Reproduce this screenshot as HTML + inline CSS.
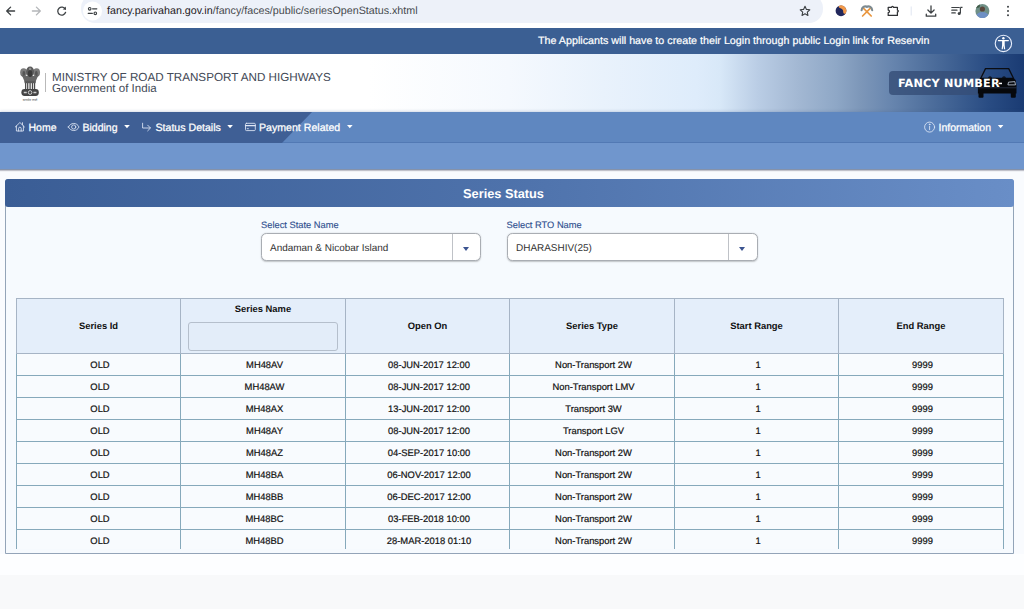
<!DOCTYPE html>
<html lang="en">
<head>
<meta charset="utf-8">
<title>Series Status</title>
<style>
*{box-sizing:border-box;margin:0;padding:0}
html,body{width:1024px;height:609px;overflow:hidden}
body{text-rendering:geometricPrecision;font-family:"Liberation Sans",Arial,sans-serif;background:#f9fbfe;color:#222;position:relative}
.abs{position:absolute}
/* browser chrome */
#chrome{left:0;top:0;width:1024px;height:28px;background:#fff}
#urlpill{left:81px;top:-6px;width:741.500px;height:28.500px;border-radius:14px;background:#edf1f9}
#url{left:107px;top:5px;font-size:10.73px;color:#1f2023;white-space:nowrap}
/* top bar */
#topbar{left:0;top:28px;width:1024px;height:26.500px;background:#3b5f93}
#marq{-webkit-text-stroke:.2px #fff;left:538px;top:35px;font-size:10.73px;color:#fff;white-space:nowrap}
/* header */
#header{left:0;top:54px;width:1024px;height:58px;background:linear-gradient(90deg,#ffffff 0%,#ffffff 36%,#f5f9fe 49.700%,#e9f2fc 58.900%,#deecfb 68%,#d8e8f8 70.300%,#bacde5 74%,#a3b8d3 77.900%,#8ea7c6 81.700%,#7d97b9 84%,#6785ae 87.100%,#52729f 90.200%,#3d5f91 93.400%,#294c83 96.500%,#1a3b73 100%)}
#hline{left:45px;top:73px;width:1px;height:19px;background:#b9b9b9}
#t1{left:52px;top:70.500px;font-size:11.67px;color:#434a57;white-space:nowrap}
#t2{left:52px;top:83px;font-size:11.55px;color:#434a57;white-space:nowrap}
#fancy{left:889px;top:71px;width:96px;height:24px;border-radius:4px;background:rgba(54,78,120,.82)}
#fancytxt{left:898px;top:77px;letter-spacing:.2px;font-family:"DejaVu Sans","Liberation Sans",sans-serif;font-weight:bold;font-size:11.24px;color:#fff;white-space:nowrap}
/* nav */
#nav{left:0;top:112px;width:1024px;height:31px;background:#5f87c0;border-bottom:1px solid #5279b4;box-shadow:0 -1px 2.500px rgba(70,90,140,.22)}
#navdark{left:0;top:112px;width:312px;height:31px;background:#3f5f95;clip-path:polygon(0 0,100% 0,282px 100%,0 100%)}
.nv{-webkit-text-stroke:.25px #fff;top:122px;font-size:10.5px;color:#fff;white-space:nowrap}
#strip{left:0;top:143px;width:1024px;height:27px;background:#7096cd;border-bottom:1px solid #8592aa;box-shadow:0 1px 1px rgba(90,90,110,.35)}
/* panel */
#panel{left:5px;top:179px;width:1009px;height:375px;border:1px solid #93a4b8;border-radius:3px 3px 0 0;background:#f6fafe}
#phead{left:5px;top:178.500px;width:1009px;height:28px;border-radius:3px;background:linear-gradient(90deg,#3a5d95 0%,#4e72ab 50%,#698ec7 100%)}
#ptitle{left:5px;top:186px;width:1009px;text-align:center;font-size:12.78px;font-weight:bold;color:#fff;padding-right:12px}
.lbl{-webkit-text-stroke:.12px #2f4f8f;font-size:9.32px;color:#2f4f8f;white-space:nowrap}
.sel{height:28px;border:1.200px solid #a9adb3;border-radius:5.500px;background:#fff;box-shadow:0 .5px 1.500px rgba(0,0,0,.22)}
.seltxt{font-size:9.96px;color:#333;white-space:nowrap}
.selbtn{width:29px;height:26px;border-left:1px solid #bfc2c7}
.tri{width:0;height:0;border-left:3.700px solid transparent;border-right:3.700px solid transparent;border-top:4.500px solid #3b5490}
/* table */
table{border-collapse:collapse;table-layout:fixed;font-size:9.4px;color:#111}
th{background:#e4eefa;border:1px solid #a6b4c5;font-weight:bold;height:55px;text-align:center;vertical-align:middle;padding-bottom:2px}
td{-webkit-text-stroke:.2px #111;border:1px solid #86a9bb;height:22px;text-align:center;background:#f8fbfe;padding-left:3px}
</style>
</head>
<body>
<div id="chrome" class="abs"></div>
<div id="urlpill" class="abs"></div>

<svg class="abs" style="left:0;top:0" width="1024" height="28" viewBox="0 0 1024 28" fill="none">
<!-- back -->
<path d="M14.6 11H6.8M10.6 7.1L6.7 11l3.9 3.9" stroke="#3c4043" stroke-width="1.3" stroke-linecap="round" stroke-linejoin="round"/>
<!-- forward -->
<path d="M32.4 11h7.8M36.4 7.1l3.9 3.9-3.9 3.9" stroke="#b4b6b9" stroke-width="1.3" stroke-linecap="round" stroke-linejoin="round"/>
<!-- reload -->
<path d="M65.3 9.2A4 4 0 1 0 65.6 12.3" stroke="#3c4043" stroke-width="1.3" stroke-linecap="round"/>
<path d="M65.9 6.4v3.2h-3.2z" fill="#3c4043"/>
<!-- site info -->
<circle cx="92.5" cy="11" r="9.6" fill="#fff"/>
<circle cx="89.7" cy="8.8" r="1.3" stroke="#3c4043" stroke-width="1.1"/>
<path d="M92.6 8.8h4.2M88.2 13.3h4.2" stroke="#3c4043" stroke-width="1.2" stroke-linecap="round"/>
<circle cx="95.3" cy="13.3" r="1.3" stroke="#3c4043" stroke-width="1.1"/>
<!-- star -->
<path d="M805 6.3l1.45 3.1 3.35.4-2.5 2.3.65 3.3-2.95-1.65-2.95 1.65.65-3.3-2.5-2.3 3.35-.4z" stroke="#3c4043" stroke-width="1.1" stroke-linejoin="round"/>
<!-- ext 1 -->
<circle cx="841" cy="10.800" r="5.400" fill="#22285c"/>
<path d="M838.800 5.900A5.400 5.400 0 0 1 845.600 13.600C844.500 14.300 843 13.400 843.200 11.800C843.400 10 842 8.700 840.500 8.300C839.400 8 838.600 7.200 838.800 5.900z" fill="#f2994a"/>
<!-- ext 2 hammers -->
<path d="M862.600 16l7.600-7.600M871.200 16l-7.600-7.600" stroke="#e9963e" stroke-width="1.700" stroke-linecap="round"/>
<path d="M861.600 10.200c.2-2.800 2.800-4.700 5.600-3.400M872.200 10.200c-.2-2.800-2.800-4.700-5.600-3.400" stroke="#7d8a90" stroke-width="2.100" stroke-linecap="round"/>
<!-- ext 3 puzzle -->
<path d="M888.200 7.300h3.400a.9.9 0 0 1 1.800 0h4v2.800a.9.9 0 0 1 0 1.800v3.500h-9.200v-2.800a1.300 1.300 0 0 0 0-2.600z" stroke="#2f3134" stroke-width="1.250" stroke-linejoin="round"/>
<!-- sep -->
<path d="M911.200 6.500v9" stroke="#dfe5f1" stroke-width="1"/>
<!-- download -->
<path d="M931 6v6.800M927.900 10l3.100 3.100 3.100-3.100M926.300 14.200v2h9.400v-2" stroke="#3c4043" stroke-width="1.3" stroke-linecap="round" stroke-linejoin="round"/>
<!-- media -->
<path d="M951.800 7.500h7.500M951.800 10.200h5.200M951.800 12.900h3.500" stroke="#3c4043" stroke-width="1.200" stroke-linecap="round"/>
<path d="M960.400 7.400v5.800" stroke="#3c4043" stroke-width="1.2"/>
<path d="M960.400 7.400h2.100" stroke="#3c4043" stroke-width="1.3"/>
<circle cx="959.200" cy="13.400" r="1.500" fill="#3c4043"/>
<!-- avatar -->
<circle cx="982.400" cy="11" r="7" fill="#6f8f86"/>
<path d="M976.500 14.800a6.300 4.500 0 0 1 11.800 0a7 7 0 0 1-11.800 0z" fill="#6e8fc4"/>
<circle cx="982.400" cy="9" r="2.600" fill="#5a463c"/>
<path d="M976 8a7 7 0 0 1 4-3.500l-.5 3z" fill="#3f5a46"/>
<!-- dots -->
<circle cx="1008" cy="6.700" r="1" fill="#3c4043"/><circle cx="1008" cy="11" r="1" fill="#3c4043"/><circle cx="1008" cy="15.300" r="1" fill="#3c4043"/>
</svg>
<div id="url" class="abs">fancy.parivahan.gov.in<span style="color:#474a4e">/fancy/faces/public/seriesOpenStatus.xhtml</span></div>

<div id="topbar" class="abs"></div>
<div id="marq" class="abs">The Applicants will have to create their Login through public Login link for Reservin</div>


<svg class="abs" style="left:993px;top:33px" width="21" height="21" viewBox="0 0 21 21" fill="none">
<circle cx="10.400" cy="10.400" r="8.200" stroke="#e8eefc" stroke-width="1.100"/>
<circle cx="10.400" cy="5.200" r="1.200" fill="#fff"/>
<path d="M5.400 7.600h10M10.400 7.600v4" stroke="#fff" stroke-width="1.100" stroke-linecap="round"/>
<path d="M9.100 7.600h2.600v4.300l.5 4.300h-1.200l-.6-3.600-.6 3.600h-1.200l.5-4.300z" fill="#fff"/>
</svg>
<div id="header" class="abs"></div>

<svg class="abs" style="left:18px;top:64px" width="24.200" height="40" viewBox="0 0 26 40" preserveAspectRatio="none">
<ellipse cx="6" cy="8.600" rx="3.700" ry="4.300" fill="#7b7b7b"/>
<ellipse cx="20" cy="8.600" rx="3.700" ry="4.300" fill="#7b7b7b"/>
<ellipse cx="13" cy="7.600" rx="4.300" ry="5" fill="#5c5c5c"/>
<path d="M3.600 10.500q1.500 2.500 3.600 7.500h11.600q2.100-5 3.600-7.500l-4.400 1.500h-10z" fill="#666"/>
<ellipse cx="13" cy="9.500" rx="2.400" ry="3.600" fill="#3a3a3a"/>
<ellipse cx="6.300" cy="9.500" rx="1.500" ry="2.400" fill="#555"/>
<ellipse cx="19.700" cy="9.500" rx="1.500" ry="2.400" fill="#555"/>
<circle cx="13" cy="5" r="1.300" fill="#8d8d8d"/>
<path d="M7.200 17.500h11.600v7.800h-11.600z" fill="#f4f4f4"/>
<path d="M8.200 17.500v7.800M10.400 17.500v7.800M13 17.500v7.800M15.600 17.500v7.800M17.800 17.500v7.800" stroke="#4a4a4a" stroke-width="1.300"/>
<path d="M7 17h12v2.200h-12z" fill="#5a5a5a"/>
<rect x="3.600" y="25" width="18.800" height="7" rx="3.400" fill="#444"/>
<circle cx="13" cy="28.500" r="1.900" fill="none" stroke="#dcdcdc" stroke-width=".9"/>
<path d="M6.200 28.500h3.200M16.600 28.500h3.200" stroke="#cfcfcf" stroke-width="1.500"/>
<text x="13" y="36.800" font-size="3.200" text-anchor="middle" fill="#555" font-family="'Liberation Sans',sans-serif">सत्यमेव जयते</text>
</svg>
<div id="hline" class="abs"></div>
<div id="t1" class="abs">MINISTRY OF ROAD TRANSPORT AND HIGHWAYS</div>
<div id="t2" class="abs">Government of India</div>
<div id="fancy" class="abs"></div>

<svg class="abs" style="left:975px;top:66px" width="44" height="34" viewBox="0 0 44 34">
<path d="M10.500 2.600h23.200l5 10.200h-33.200z" fill="none" stroke="#0b0d12" stroke-width="1.300" stroke-linejoin="round"/>
<path d="M6.500 11.800h31.200l3 2.200 .8 5.200v8.300h-38.600v-8.300l.8-5.200z" fill="#06080c"/>
<path d="M13 11.800c.5-1.600 3.500-1.600 4 0zM27 11.800c.5-1.600 3.500-1.600 4 0z" fill="#06080c"/>
<rect x="3.500" y="26" width="5" height="5.800" rx="1" fill="#06080c"/>
<rect x="35.800" y="26" width="5" height="5.800" rx="1" fill="#06080c"/>
<path d="M33.500 16.200l6.300-.6.700 3.300h-7.600z" fill="none" stroke="#c9d3e4" stroke-width=".8"/>
<path d="M3.400 21.800h38" stroke="#3a4660" stroke-width=".6"/>
<rect x="23.600" y="16.700" width="3.400" height="1.500" fill="#fff"/>
</svg>
<div id="fancytxt" class="abs">FANCY NUMBER</div>

<div id="nav" class="abs"></div>
<div id="navdark" class="abs"></div>
<div class="abs nv" style="left:28.500px">Home</div>
<div class="abs nv" style="left:82.500px">Bidding</div>
<div class="abs nv" style="left:155.500px;font-size:10.600px">Status Details</div>
<div class="abs nv" style="left:259px;font-size:10.600px">Payment Related</div>
<div class="abs nv" style="left:938.500px">Information</div>

<svg class="abs" style="left:0;top:112px" width="1024" height="31" viewBox="0 0 1024 31" fill="none" stroke="#dfe7f6" stroke-width=".85" stroke-linecap="round" stroke-linejoin="round">
<!-- home -->
<path d="M15.300 15l4.600-4.500 4.600 4.500M16.400 14v5h7v-5M18.600 19v-2.500a1.300 1.300 0 0 1 2.600 0v2.500M22.500 10.700v1.900"/>
<!-- eye -->
<path d="M68.400 15c2.200-4.800 8.400-4.800 10.600 0-2.200 4.800-8.400 4.800-10.600 0z"/>
<circle cx="73.700" cy="15" r="2.100"/>
<!-- arrow -->
<path d="M142.600 11.200v4.800h7.600M147.700 13.200l2.800 2.800-2.800 2.800"/>
<!-- card -->
<rect x="245.500" y="11.300" width="9.800" height="7.300" rx="1"/>
<path d="M245.500 13.600h9.800" stroke-width="1.300"/>
<path d="M247.200 16.700h1.200"/>
<!-- info -->
<circle cx="929.600" cy="15.100" r="5"/>
<path d="M929.600 14.300v3.400" />
<circle cx="929.600" cy="12.400" r=".4" fill="#e9effa"/>
<!-- carets -->
<g fill="#fff" stroke="none">
<path d="M124.200 13h5.600l-2.800 3.200z"/>
<path d="M227.300 13h5.600l-2.800 3.200z"/>
<path d="M347 13h5.600l-2.800 3.200z"/>
<path d="M997.800 13h5.600l-2.800 3.200z"/>
</g>
</svg>
<div id="strip" class="abs"></div>

<div class="abs" style="left:0;top:554px;width:1024px;height:21px;background:#fdfeff"></div><div class="abs" style="left:0;top:575px;width:1024px;height:34px;background:#f8f9fa"></div>
<div id="panel" class="abs"></div>
<div id="phead" class="abs"></div>
<div id="ptitle" class="abs">Series Status</div>

<div class="abs lbl" style="left:261px;top:220.200px">Select State Name</div>
<div class="abs sel" style="left:261px;top:233px;width:220.400px"></div>
<div class="abs seltxt" style="left:270px;top:242.500px">Andaman &amp; Nicobar Island</div>
<div class="abs selbtn" style="left:452px;top:234px"></div>
<div class="abs tri" style="left:463.200px;top:247px"></div>

<div class="abs lbl" style="left:506.500px;top:220.200px">Select RTO Name</div>
<div class="abs sel" style="left:506.500px;top:233px;width:251px"></div>
<div class="abs seltxt" style="left:516px;top:242.500px">DHARASHIV(25)</div>
<div class="abs selbtn" style="left:728px;top:234px"></div>
<div class="abs tri" style="left:739.200px;top:247px"></div>

<div class="abs" id="tblwrap" style="left:16px;top:298px;width:988px;height:251px;overflow:hidden">
<table style="width:987px">
<colgroup><col style="width:164px"><col style="width:165px"><col style="width:164px"><col style="width:165px"><col style="width:164px"><col style="width:165px"></colgroup>
<thead><tr><th>Series Id</th><th style="vertical-align:top;padding-top:4px">Series Name<div style="margin:8px auto 0;width:150px;height:29px;border:1px solid #b5bfcc;border-radius:3px;background:#e3edf9"></div></th><th>Open On</th><th>Series Type</th><th>Start Range</th><th>End Range</th></tr></thead>
<tbody>
<tr><td>OLD</td><td>MH48AV</td><td>08-JUN-2017 12:00</td><td>Non-Transport 2W</td><td>1</td><td>9999</td></tr>
<tr><td>OLD</td><td>MH48AW</td><td>08-JUN-2017 12:00</td><td>Non-Transport LMV</td><td>1</td><td>9999</td></tr>
<tr><td>OLD</td><td>MH48AX</td><td>13-JUN-2017 12:00</td><td>Transport 3W</td><td>1</td><td>9999</td></tr>
<tr><td>OLD</td><td>MH48AY</td><td>08-JUN-2017 12:00</td><td>Transport LGV</td><td>1</td><td>9999</td></tr>
<tr><td>OLD</td><td>MH48AZ</td><td>04-SEP-2017 10:00</td><td>Non-Transport 2W</td><td>1</td><td>9999</td></tr>
<tr><td>OLD</td><td>MH48BA</td><td>06-NOV-2017 12:00</td><td>Non-Transport 2W</td><td>1</td><td>9999</td></tr>
<tr><td>OLD</td><td>MH48BB</td><td>06-DEC-2017 12:00</td><td>Non-Transport 2W</td><td>1</td><td>9999</td></tr>
<tr><td>OLD</td><td>MH48BC</td><td>03-FEB-2018 10:00</td><td>Non-Transport 2W</td><td>1</td><td>9999</td></tr>
<tr><td>OLD</td><td>MH48BD</td><td>28-MAR-2018 01:10</td><td>Non-Transport 2W</td><td>1</td><td>9999</td></tr>
</tbody>
</table>
</div>
</body>
</html>
